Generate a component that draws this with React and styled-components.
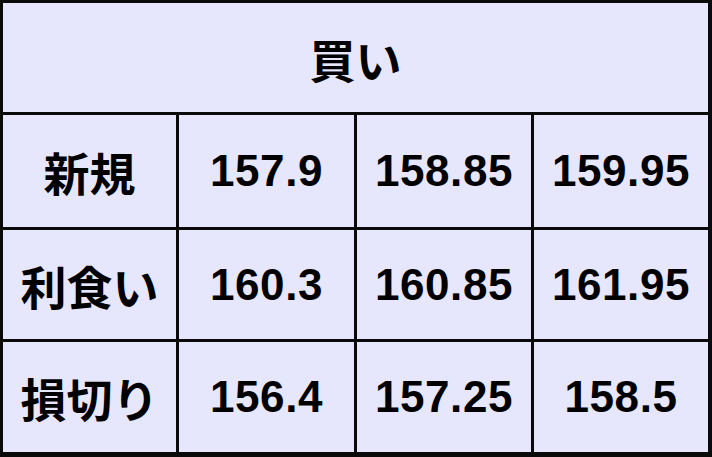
import React from 'react';
import styled, { createGlobalStyle } from 'styled-components';

const GlobalStyle = createGlobalStyle`
  html, body {
    margin: 0;
    padding: 0;
    background: #ffffff;
  }
`;

const Table = styled.div`
  display: grid;
  grid-template-columns: 173px 175px 174px 174px;
  grid-template-rows: 109px 112px 109px 110px;
  gap: 3px;
  padding: 3px;
  width: 712px;
  height: 457px;
  box-sizing: border-box;
  background: #0a0a0a;
  font-family: "Liberation Sans", Arial, "Noto Sans CJK JP", sans-serif;
  font-weight: bold;
  color: #000;
`;

const Cell = styled.div`
  display: flex;
  align-items: center;
  justify-content: center;
  background: #e6e6fc;
  font-size: ${props => (props.cjk ? '46px' : '44px')};
  line-height: 1;
  grid-column: ${props => (props.span ? `span ${props.span}` : 'auto')};
  font-family: ${props =>
    props.cjk
      ? '"Noto Sans CJK JP", sans-serif'
      : '"Liberation Sans", Arial, "Noto Sans CJK JP", sans-serif'};
  font-weight: bold;
  letter-spacing: ${props => (props.cjk ? '0' : '0.6px')};
`;

const rows = [
  { label: '新規', values: ['157.9', '158.85', '159.95'] },
  { label: '利食い', values: ['160.3', '160.85', '161.95'] },
  { label: '損切り', values: ['156.4', '157.25', '158.5'] },
];

const App = () => (
  <>
    <GlobalStyle />
    <Table>
      <Cell span={4} cjk>買い</Cell>
      {rows.map(row => (
        <React.Fragment key={row.label}>
          <Cell cjk>{row.label}</Cell>
          {row.values.map(v => (
            <Cell key={v}>{v}</Cell>
          ))}
        </React.Fragment>
      ))}
    </Table>
  </>
);

export default App;
